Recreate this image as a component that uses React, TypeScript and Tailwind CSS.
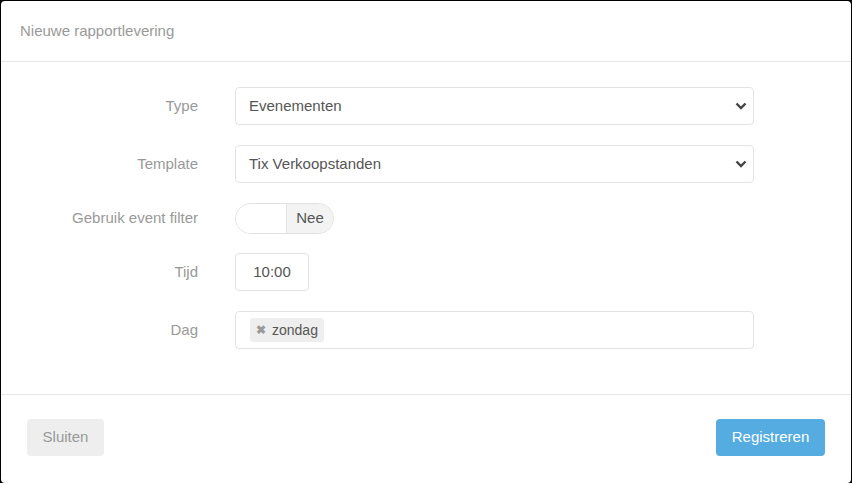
import React from "react";

const font = { fontFamily: '"Liberation Sans", Arial, sans-serif' };

function Chevron() {
  return (
    <svg width="12" height="8" viewBox="0 0 12 8" className="text-[#444]">
      <path d="M1.5 1.5 L6 6 L10.5 1.5" fill="none" stroke="currentColor" strokeWidth="2.4" />
    </svg>
  );
}

function Label({ children }: { children: React.ReactNode }) {
  return <div className="w-[197px] shrink-0 text-right text-[15px] text-[#999]">{children}</div>;
}

function Select({ value }: { value: string }) {
  return (
    <div className="flex h-[38px] w-[519px] items-center justify-between rounded-[4px] border border-[#e3e3e3] pl-[13px] pr-[6px] text-[15px] text-[#555]">
      <span>{value}</span>
      <Chevron />
    </div>
  );
}

export default function App() {
  return (
    <div className="h-[483px] w-[852px] overflow-hidden bg-black px-px pt-px" style={font}>
      <div className="flex h-[482px] flex-col rounded-[4px] bg-white">
        <div className="flex h-[61px] shrink-0 items-center border-b border-[#e5e5e5] px-[19px] text-[15px] text-[#999]">
          Nieuwe rapportlevering
        </div>

        <div className="flex flex-col gap-5 pb-[45px] pt-[25px]">
          <div className="flex items-center gap-[37px]">
            <Label>Type</Label>
            <Select value="Evenementen" />
          </div>
          <div className="flex items-center gap-[37px]">
            <Label>Template</Label>
            <Select value="Tix Verkoopstanden" />
          </div>
          <div className="flex h-[30px] items-center gap-[37px]">
            <Label>Gebruik event filter</Label>
            <div className="flex h-[31px] w-[99px] overflow-hidden rounded-full border border-[#e0e0e0]">
              <div className="w-[50px] bg-white" />
              <div className="flex flex-1 items-center justify-center border-l border-[#e6e6e6] bg-[#f3f3f3] text-[15px] text-[#555]">
                Nee
              </div>
            </div>
          </div>
          <div className="flex items-center gap-[37px]">
            <Label>Tijd</Label>
            <div className="flex h-[38px] w-[74px] items-center justify-center rounded-[4px] border border-[#e3e3e3] text-[15px] text-[#555]">
              10:00
            </div>
          </div>
          <div className="flex items-center gap-[37px]">
            <Label>Dag</Label>
            <div className="flex h-[38px] w-[519px] items-center rounded-[4px] border border-[#e3e3e3] pl-[14px]">
              <span className="flex h-[24px] items-center gap-[6px] rounded-[3px] bg-[#eee] pl-[6px] pr-[6px] text-[14px] text-[#555]">
                <span className="text-[12px] font-bold text-[#999]">✖</span>
                zondag
              </span>
            </div>
          </div>
        </div>

        <div className="flex items-start justify-between border-t border-[#e5e5e5] px-[26px] pt-[24px]">
          <button className="h-[37px] w-[77px] rounded-[4px] bg-[#eee] text-[15px] text-[#999]">Sluiten</button>
          <button className="h-[37px] w-[109px] rounded-[4px] bg-[#55ace0] text-[15px] text-white">Registreren</button>
        </div>
      </div>
    </div>
  );
}
